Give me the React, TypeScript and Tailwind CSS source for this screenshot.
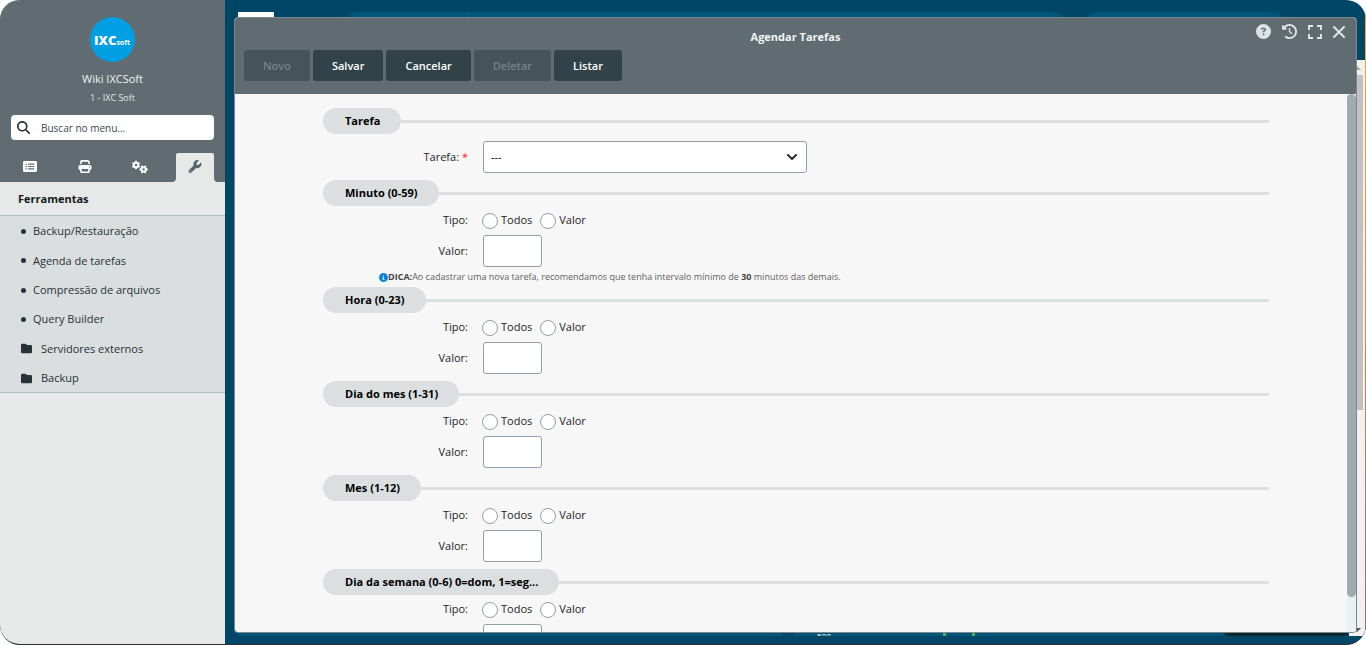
import React, { useState } from 'react';
import {
  FaMagnifyingGlass,
  FaPrint,
  FaGears,
  FaWrench,
  FaRectangleList,
  FaFolder,
  FaCircle,
  FaCircleInfo,
  FaCircleQuestion,
  FaClockRotateLeft,
  FaChevronDown,
} from 'react-icons/fa6';

interface MenuItem {
  label: string;
  folder?: boolean;
}

interface ToolbarButton {
  label: string;
  disabled?: boolean;
}

interface ScheduleField {
  id: string;
  title: string;
  showTip?: boolean;
}

const menuItems: MenuItem[] = [
  { label: 'Backup/Restauração' },
  { label: 'Agenda de tarefas' },
  { label: 'Compressão de arquivos' },
  { label: 'Query Builder' },
  { label: 'Servidores externos', folder: true },
  { label: 'Backup', folder: true },
];

const toolbarButtons: ToolbarButton[] = [
  { label: 'Novo', disabled: true },
  { label: 'Salvar' },
  { label: 'Cancelar' },
  { label: 'Deletar', disabled: true },
  { label: 'Listar' },
];

const scheduleFields: ScheduleField[] = [
  { id: 'minuto', title: 'Minuto (0-59)', showTip: true },
  { id: 'hora', title: 'Hora (0-23)' },
  { id: 'dia', title: 'Dia do mes (1-31)' },
  { id: 'mes', title: 'Mes (1-12)' },
  { id: 'semana', title: 'Dia da semana (0-6) 0=dom, 1=seg...' },
];

const sidebarTabs = [
  { id: 'cadastros', label: 'Cadastros', Icon: FaRectangleList },
  { id: 'relatorios', label: 'Relatórios', Icon: FaPrint },
  { id: 'configuracoes', label: 'Configurações', Icon: FaGears },
  { id: 'ferramentas', label: 'Ferramentas', Icon: FaWrench },
];

function TabFlare({ flip }: { flip?: boolean }) {
  return (
    <svg viewBox="0 0 3 4" className={`absolute bottom-0 h-1 w-[3px] ${flip ? 'left-full -scale-x-100' : 'right-full'}`}>
      <path d="M3 0v4H0Q3 3 3 0z" fill="#e7e9e8" />
    </svg>
  );
}

function Sidebar() {
  const [activeTab, setActiveTab] = useState('ferramentas');

  return (
    <aside className="flex w-[225px] shrink-0 flex-col bg-[#e7e9e8]">
      <div className="flex flex-col items-center bg-[#606c71] pt-[17px]">
        <svg viewBox="0 0 45 45" className="h-[45px] w-[45px]" role="img" aria-label="IXCsoft">
          <circle cx="22.5" cy="22.5" r="22.5" fill="#009fe3" />
          <text x="4" y="28" fill="#fff" fontFamily="Open Sans, sans-serif" fontSize="13" fontWeight="800">
            IXC<tspan fontSize="7" fontWeight="700">soft</tspan>
          </text>
        </svg>
        <p className="mt-2 text-[11px] leading-[18px] font-medium text-[#f0f2f2]">Wiki IXCSoft</p>
        <p className="mt-[2px] text-[9px] leading-[16px] text-[#e0e4e4]">1 - IXC Soft</p>
        <div className="mt-[9px] flex h-[25px] w-[203px] items-center gap-[11px] rounded-[4px] bg-white pl-[6px]">
          <FaMagnifyingGlass className="h-[13px] w-[13px] shrink-0 text-[#263238]" />
          <input
            type="text"
            aria-label="Buscar no menu"
            placeholder="Buscar no menu..."
            className="w-full bg-transparent pt-px text-[10px] text-[#37474f] outline-none placeholder:text-[#37474f]"
          />
        </div>
        <div className="mt-[13px] flex w-full gap-[17px] pl-[11px]" role="tablist">
          {sidebarTabs.map(({ id, label, Icon }) => (
            <button
              key={id}
              role="tab"
              aria-label={label}
              aria-selected={activeTab === id}
              onClick={() => setActiveTab(id)}
              className={`relative flex h-[29px] w-[38px] shrink-0 items-center justify-center rounded-t-[2px] pb-[2px] ${activeTab === id ? 'bg-[#e7e9e8] text-[#54626a]' : 'text-white'}`}
            >
              <Icon className={id === 'configuracoes' ? 'h-[16px] w-[16px]' : 'h-[13px] w-[14px]'} />
              {activeTab === id && <TabFlare />}
              {activeTab === id && <TabFlare flip />}
            </button>
          ))}
        </div>
      </div>
      <h2 className="flex h-[34px] items-center border-b border-[#b4bfc4] pt-px pl-[18px] text-[11px] font-bold text-[#10181c]">Ferramentas</h2>
      <ul className="grid h-[177px] auto-rows-fr border-b border-[#b4bfc4] bg-[#dbdedf]">
        {menuItems.map((item) => (
          <li key={item.label} className="flex">
            <a href="#" className={`flex flex-1 items-center pt-[2px] pl-[21px] text-[11px] text-[#263238] ${item.folder ? 'gap-[9px]' : 'gap-[7px]'}`}>
              {item.folder ? <FaFolder className="h-[11px] w-[11px]" /> : <FaCircle className="h-[5px] w-[5px]" />}
              {item.label}
            </a>
          </li>
        ))}
      </ul>
    </aside>
  );
}

function SectionTitle({ title }: { title: string }) {
  return (
    <div className="flex items-center">
      <h3 className="flex h-[26px] items-center rounded-full bg-[#dbdfe0] pr-[21px] pl-[22px] text-[11px] font-bold text-black">{title}</h3>
      <div className="h-[3px] flex-1 rounded-r-full bg-[#dbdfe0]" />
    </div>
  );
}

function ScheduleSection({ field }: { field: ScheduleField }) {
  return (
    <section className="pb-[7px]">
      <SectionTitle title={field.title} />
      <div className="flex h-[29px] items-center" role="radiogroup" aria-label={field.title}>
        <span className="w-[145px] text-right">Tipo:</span>
        {['Todos', 'Valor'].map((option) => (
          <label key={option} className="ml-[14px] flex items-center gap-[3px] last:ml-2">
            <input
              type="radio"
              name={`${field.id}-tipo`}
              value={option}
              className="h-4 w-4 appearance-none rounded-full border border-[#90a0a7] bg-white checked:border-[5px] checked:border-[#009fe3]"
            />
            {option}
          </label>
        ))}
      </div>
      <div className="flex items-center">
        <label htmlFor={`${field.id}-valor`} className="w-[145px] text-right">Valor:</label>
        <input
          id={`${field.id}-valor`}
          type="text"
          className="ml-[15px] h-[32px] w-[59px] rounded-[3px] border border-[#90a0a7] bg-white px-2"
        />
      </div>
      {field.showTip && (
        <p className="mt-[3px] -mb-1 flex h-[14px] items-center pl-[56px] text-[9px] text-[#5f5f5f]">
          <FaCircleInfo className="h-[9px] w-[9px] text-[#0a84e0]" />
          <span>
            <b className="text-[#444]">DICA:</b>Ao cadastrar uma nova tarefa, recomendamos que tenha intervalo mínimo de <b className="text-[#444]">30</b> minutos das demais.
          </span>
        </p>
      )}
    </section>
  );
}

function TaskDialog() {
  return (
    <div
      role="dialog"
      aria-label="Agendar Tarefas"
      className="absolute top-[17px] right-[8px] bottom-[11px] left-[9px] flex flex-col overflow-hidden rounded-[4px] border border-[#7b878d] bg-[#f7f7f7]"
    >
      <header className="relative h-[76px] shrink-0 bg-[#606c71] pt-[10px]">
        <h1 className="text-center text-[11px] leading-[18px] font-bold text-[#f2f4f4]">Agendar Tarefas</h1>
        <div className="mt-1 flex gap-[3px] pl-[9px]">
          {toolbarButtons.map((button) => (
            <button
              key={button.label}
              disabled={button.disabled}
              className={`h-[31px] rounded-[3px] px-[19px] pt-px text-[11px] font-semibold ${button.disabled ? 'bg-[#46545a] text-[#75838a]' : 'bg-[#314249] text-white'}`}
            >
              {button.label}
            </button>
          ))}
        </div>
        <div className="absolute top-[6px] right-[11px] flex items-center gap-[11px] text-[#dfe2e3]">
          <button aria-label="Ajuda"><FaCircleQuestion className="h-[15px] w-[15px]" /></button>
          <button aria-label="Histórico"><FaClockRotateLeft className="h-[15px] w-[15px]" /></button>
          <button aria-label="Tela cheia">
            <svg viewBox="0 0 14 14" className="h-[14px] w-[14px]" fill="none" stroke="currentColor" strokeWidth="2">
              <path d="M1 5V1h4M9 1h4v4M13 9v4H9M5 13H1V9" />
            </svg>
          </button>
          <button aria-label="Fechar">
            <svg viewBox="0 0 12 12" className="h-[12px] w-[12px]" fill="none" stroke="currentColor" strokeWidth="2" strokeLinecap="round">
              <path d="M1 1l10 10M11 1L1 11" />
            </svg>
          </button>
        </div>
      </header>
      <div className="flex min-h-0 flex-1">
        <form className="min-w-0 flex-1 overflow-hidden pt-[14px] pr-[78px] pl-[88px] text-[11px] text-[#1d2428]">
          <section className="pb-[7px]">
            <SectionTitle title="Tarefa" />
            <div className="mt-[7px] flex items-center">
              <label htmlFor="tarefa" className="w-[145px] text-right">
                Tarefa: <span className="text-[#ff1a1a]">*</span>
              </label>
              <div className="relative ml-[15px] w-[324px]">
                <select id="tarefa" className="block h-[32px] w-full appearance-none rounded-[3px] border border-[#90a0a7] bg-white px-[7px] text-black">
                  <option>---</option>
                </select>
                <svg viewBox="0 0 10 6" className="pointer-events-none absolute top-[13px] right-[10px] h-[6px] w-[10px]" fill="none" stroke="#263238" strokeWidth="2" strokeLinecap="round" strokeLinejoin="round">
                  <path d="M1 1l4 4 4-4" />
                </svg>
              </div>
            </div>
          </section>
          {scheduleFields.map((field) => (
            <ScheduleSection key={field.id} field={field} />
          ))}
        </form>
        <div className="flex w-[9px] shrink-0 flex-col bg-[#e8f1f5] pb-[35px]">
          <div className="flex-1 rounded-full bg-[#a0abb1]" />
        </div>
      </div>
    </div>
  );
}

// Dashboard that stays visible around the edges of the dialog
function Backdrop() {
  return (
    <div className="flex h-full flex-col justify-between pt-[12px] pb-[8px]">
      <div className="flex h-[48px] pr-[80px] pl-[13px]">
        <div className="h-6 w-9 bg-white" />
        <div className="ml-[71px] flex h-6 flex-1 rounded-full bg-[#00557a]">
          <div className="ml-[122px] w-px bg-[#006590]" />
        </div>
        <div className="ml-5 h-6 w-[200px] rounded-full bg-[#00557a]" />
      </div>
      <div className="flex min-h-0 flex-1">
        <div className="flex flex-1 items-end pl-[13px]">
          <div className="h-10 flex-1 bg-[#00557a]" />
          <div className="h-10 w-[12px] bg-[#004666]" />
          <div className="flex h-10 w-[430px] items-end bg-[#00557a] pl-[23px] text-[8px] leading-[8px] text-white">
            <span className="h-[4px] w-[126px] overflow-hidden">500</span>
            <span className="h-10 w-[3px] bg-[#4caf50]" />
            <span className="ml-[26px] h-10 w-[3px] bg-[#4caf50]" />
          </div>
          <div className="h-10 w-[125px] rounded-b-[5px] bg-[#0a262c]" />
        </div>
        <div className="flex w-[16px] flex-col bg-[#f1f1f1]">
          <div className="flex h-[15px] items-center justify-center">
            <svg viewBox="0 0 8 4" className="h-[4px] w-[8px]"><path d="M0 4l4-4 4 4z" fill="#a3a3a3" /></svg>
          </div>
          <div className="h-[335px] w-[14px] bg-[#c1c1c1]" />
          <div className="mt-auto flex h-[13px] items-center justify-center">
            <svg viewBox="0 0 8 4" className="h-[4px] w-[8px]"><path d="M0 0h8L4 4z" fill="#505050" /></svg>
          </div>
        </div>
      </div>
    </div>
  );
}

export default function App() {
  return (
    <div className="h-screen bg-white font-['Open_Sans',sans-serif]">
      <div className="flex h-full overflow-hidden rounded-[20px] border-b border-[#2b3034] bg-[#004666]">
        <Sidebar />
        <main className="relative min-w-0 flex-1">
          <Backdrop />
          <TaskDialog />
        </main>
        <div className="w-px bg-linear-to-b from-[#f5b400] via-[#d9823b] to-[#9a6a78]" />
      </div>
    </div>
  );
}
